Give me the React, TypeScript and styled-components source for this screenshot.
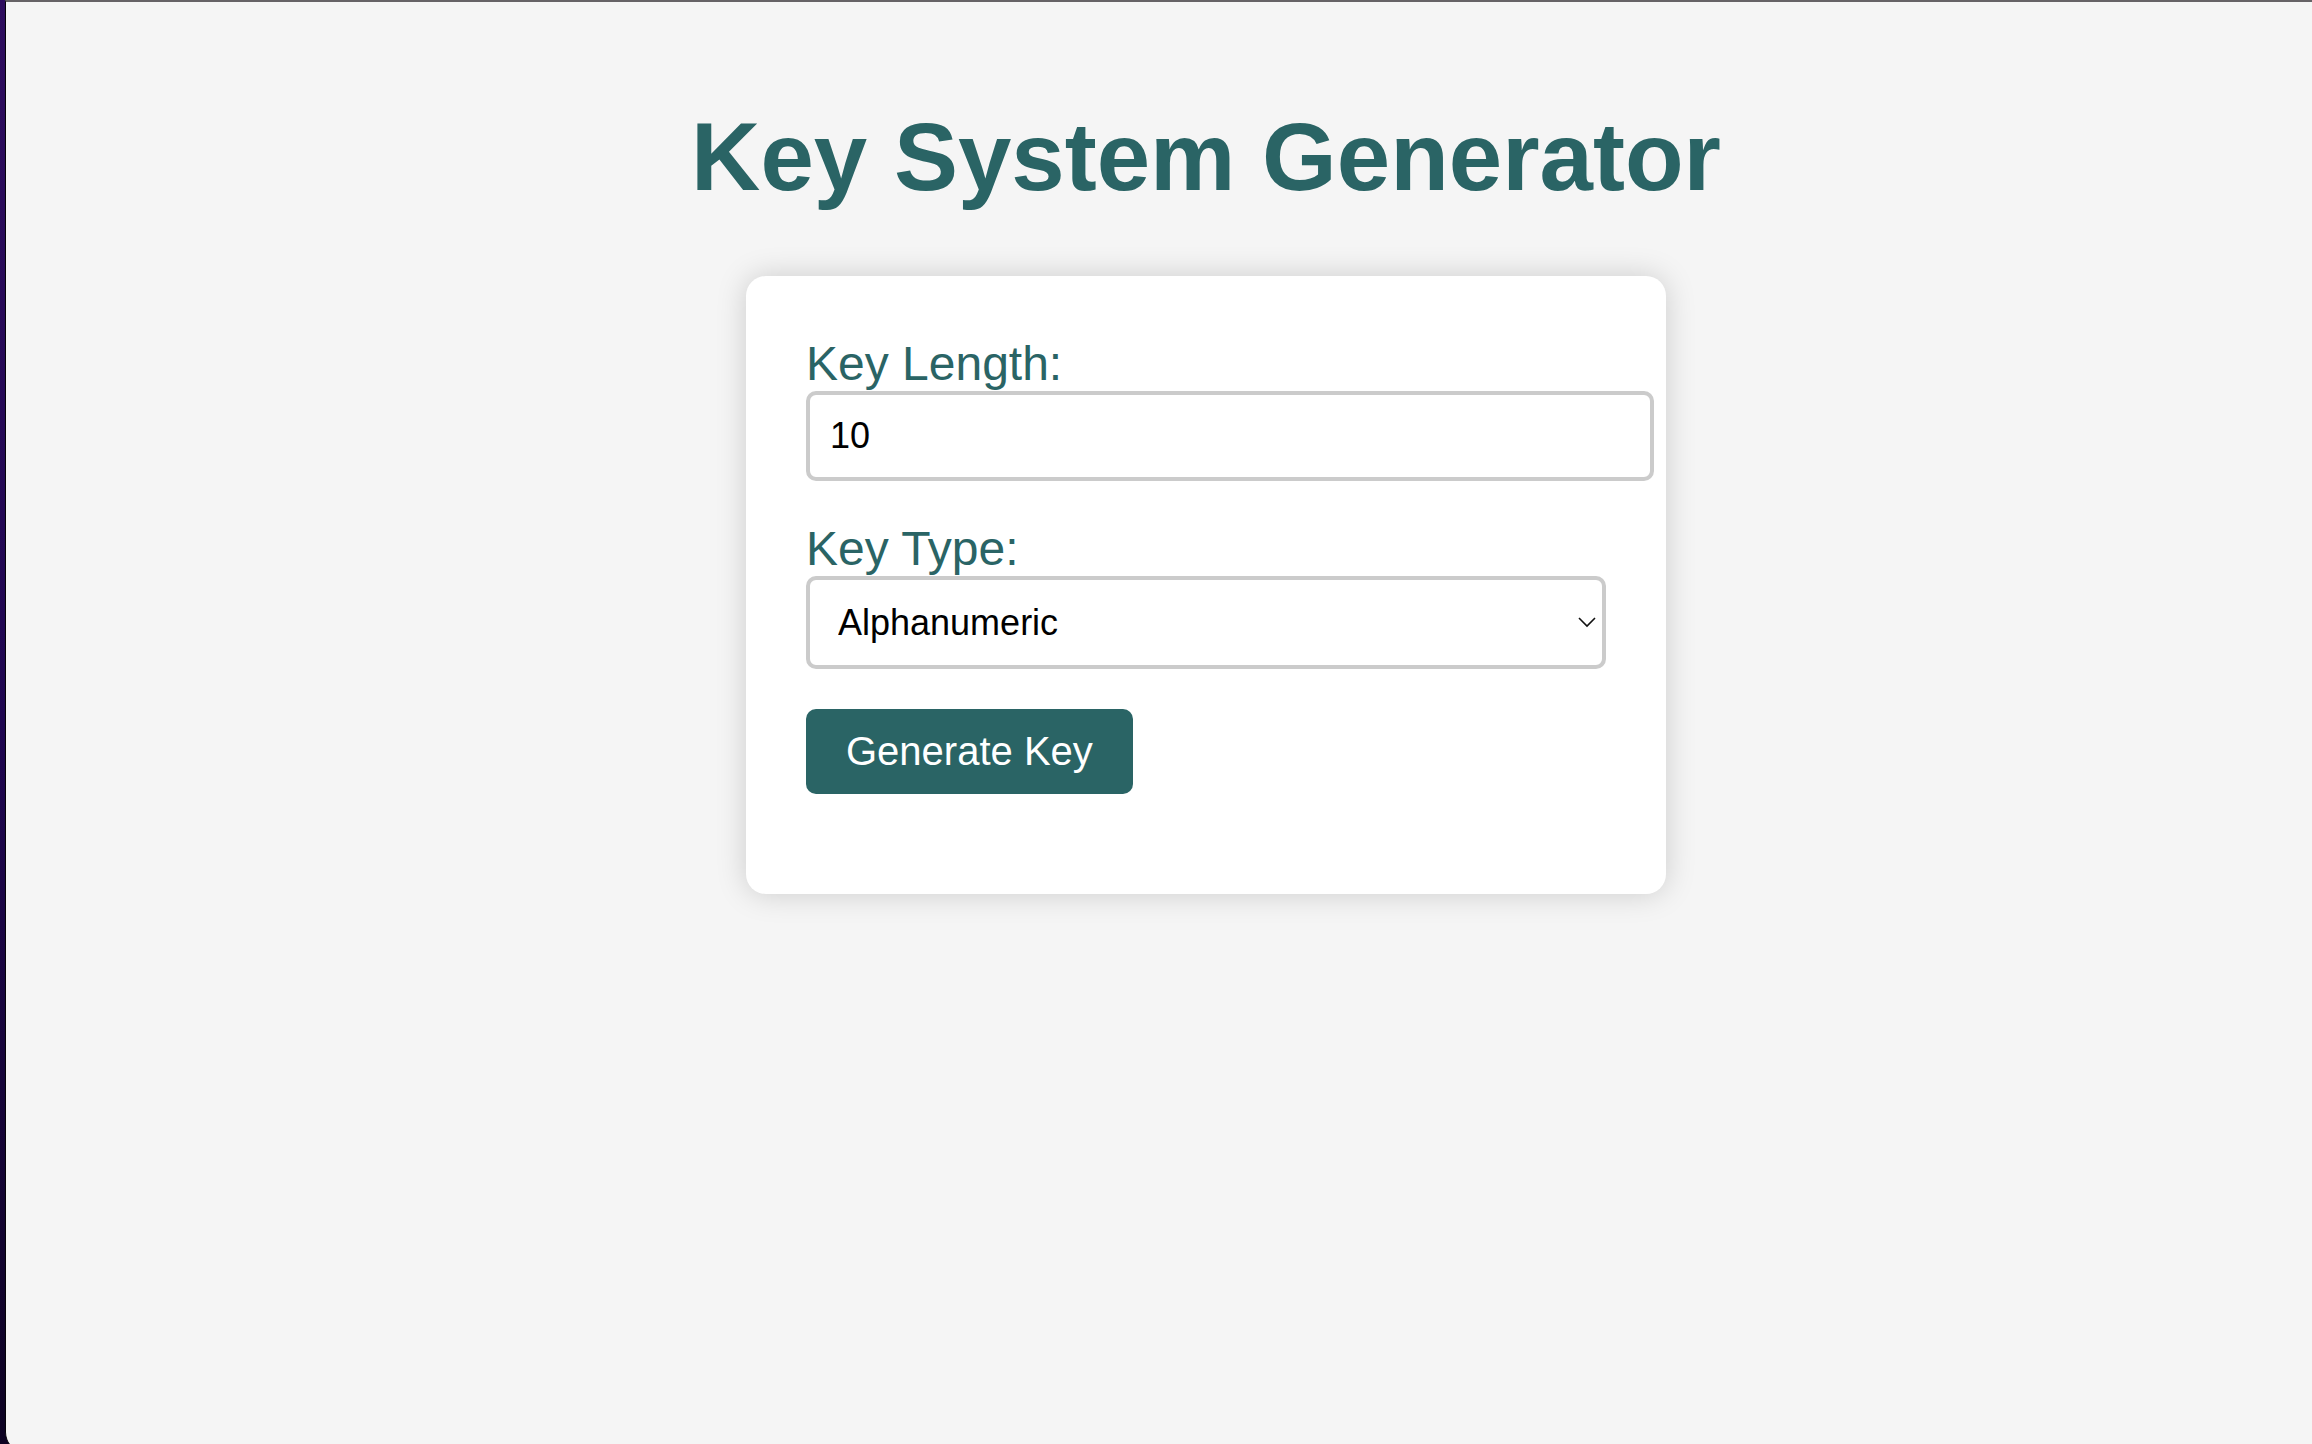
import React, { useState } from "react";
import styled, { createGlobalStyle } from "styled-components";

const teal = "#2a6465";
const font = `"Liberation Sans", Arial, Helvetica, sans-serif`;

const GlobalStyle = createGlobalStyle`
  body {
    margin: 0;
    font-family: ${font};
  }
`;

const Desktop = styled.div`
  box-sizing: border-box;
  display: flex;
  min-height: 100vh;
  padding-left: 5px;
  overflow: hidden;
  background: linear-gradient(#2e0d5e, #1f0650 50%, #0d0222);
`;

const Window = styled.div`
  flex: 1;
  margin-bottom: -8px;
  border-top: 2px solid #666366;
  border-left: 1px solid #050208;
  border-bottom-left-radius: 20px;
  background: #f5f5f5;
`;

const Page = styled.main`
  display: flex;
  flex-direction: column;
  align-items: center;
  gap: 64px;
  padding: 100px 0 64px 94px;
`;

const Title = styled.h1`
  margin: 0;
  color: ${teal};
  font-size: 96px;
  line-height: 110px;
  font-weight: bold;
  text-align: center;
`;

const Card = styled.form`
  box-sizing: border-box;
  display: flex;
  flex-direction: column;
  align-items: stretch;
  gap: 40px;
  width: 100%;
  max-width: 920px;
  padding: 60px 60px 100px;
  border-radius: 20px;
  background: #fff;
  box-shadow: 0 0 30px rgba(0, 0, 0, 0.17);
`;

const Field = styled.div`
  display: flex;
  flex-direction: column;
  align-items: flex-start;
`;

const Label = styled.label`
  color: ${teal};
  font-size: 48px;
  line-height: 55px;
`;

const TextInput = styled.input`
  box-sizing: content-box;
  width: 100%;
  height: 42px;
  padding: 20px;
  border: 4px solid #cbcbcb;
  border-radius: 10px;
  background: #fff;
  color: #000;
  font-family: ${font};
  font-size: 36px;
  line-height: 42px;
  appearance: textfield;

  &::-webkit-inner-spin-button,
  &::-webkit-outer-spin-button {
    margin: 0;
    appearance: none;
  }
`;

const SelectBox = styled.div`
  position: relative;
  display: flex;
  width: 100%;
`;

const Select = styled.select`
  box-sizing: border-box;
  width: 100%;
  height: 93px;
  padding: 20px 28px;
  border: 4px solid #cbcbcb;
  border-radius: 10px;
  background: #fff;
  color: #000;
  font-family: ${font};
  font-size: 36px;
  appearance: none;
`;

const Chevron = styled.svg`
  position: absolute;
  top: 40px;
  right: 10px;
  width: 18px;
  height: 12px;
  pointer-events: none;
`;

const Button = styled.button`
  align-self: flex-start;
  padding: 20px 40px;
  border: none;
  border-radius: 10px;
  background: ${teal};
  color: #fff;
  font-family: ${font};
  font-size: 40px;
  line-height: 45px;
  cursor: pointer;
`;

export default function App() {
  const [length, setLength] = useState("10");
  const [type, setType] = useState("alphanumeric");

  return (
    <>
      <GlobalStyle />
      <Desktop>
        <Window>
          <Page>
            <Title>Key System Generator</Title>
            <Card onSubmit={(e) => e.preventDefault()}>
              <Field>
                <Label htmlFor="key-length">Key Length:</Label>
                <TextInput
                  id="key-length"
                  type="number"
                  min="1"
                  value={length}
                  onChange={(e) => setLength(e.target.value)}
                />
              </Field>
              <Field>
                <Label htmlFor="key-type">Key Type:</Label>
                <SelectBox>
                  <Select id="key-type" value={type} onChange={(e) => setType(e.target.value)}>
                    <option value="alphanumeric">Alphanumeric</option>
                  </Select>
                  <Chevron viewBox="0 0 18 12" aria-hidden="true">
                    <path d="M1 2 L9 10 L17 2" fill="none" stroke="#111" strokeWidth="1.6" />
                  </Chevron>
                </SelectBox>
              </Field>
              <Button type="submit">Generate Key</Button>
            </Card>
          </Page>
        </Window>
      </Desktop>
    </>
  );
}
